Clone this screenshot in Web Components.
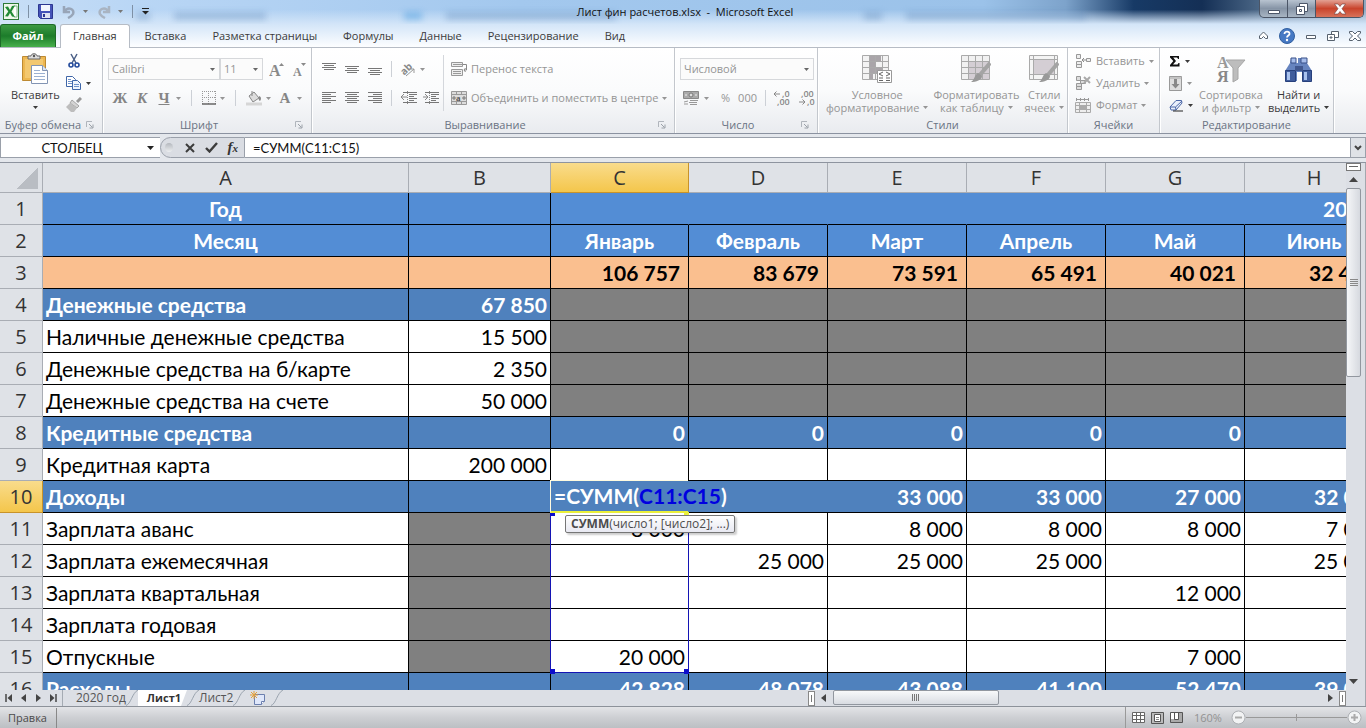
<!DOCTYPE html>
<html lang="ru">
<head>
<meta charset="utf-8">
<title>Лист фин расчетов.xlsx - Microsoft Excel</title>
<style>
  html, body { margin: 0; height: 100%; overflow: hidden; }
  body { font: 11px/14px "Open Sans", "Noto Sans", sans-serif; color: #3b3b3b; background: #dfe2e7; }
  excel-app { height: 100%; }
</style>
</head>
<body>
<excel-app></excel-app>

<script>
// Icons: [width, height, markup]
const lines = (rows) => rows.map(([x, y, w]) => `<path d="M${x} ${y}.5h${w}" stroke="#777"/>`).join('');
const ICONS = {
  excel: [16, 17, '<rect x=".5" y=".5" width="15" height="16" fill="#eef7ea" stroke="#2c7a37"/><path d="M11 3h3v11h-3" fill="#fff" stroke="#7fb88a"/><path d="M2 4l3-.5L7 7l2-4 3-.5-3.500 6L12 14l-3-.4L7 10l-2 3.500-3-.3 3.300-4.700z" fill="#218a35"/>'],
  save: [15, 15, '<path d="M.5.5h14v14h-12l-2-2z" fill="#4553b8" stroke="#2c3790"/><path d="M3 1h9v6H3z" fill="#f3f6fd"/><path d="M4 9h8v5H4z" fill="#dfe3f2"/><path d="M5 10h2v3H5z" fill="#2c3790"/>'],
  undo: [14, 14, '<path d="M2 1v6h6M2.500 6.500C6 1 13 4 11 9c-1 2-3 3-5 4" fill="none" stroke="#98a5b8" stroke-width="2.500"/>'],
  redo: [14, 14, '<path d="M12 1v6H6M11.500 6.500C8 1 1 4 3 9c1 2 3 3 5 4" fill="none" stroke="#a9b4c2" stroke-width="2.500"/>'],
  arrow: [5, 3, '<path d="M0 0h5L2.500 3z" fill="currentColor"/>'],
  qat: [7, 7, '<path d="M0 .5h7" stroke="#222"/><path d="M0 3h7L3.500 6.500z" fill="#222"/>'],
  namearrow: [7, 4, '<path d="M0 0h7L3.500 4z" fill="#222"/>'],
  paste: [28, 32, '<path d="M1.500 3.500h23v24h-23z" fill="#edb751" stroke="#bd8a33"/><path d="M4 6h18v19H4z" fill="#f3c870"/><path d="M7 6V3h3c0-3 6-3 6 0h3v3z" fill="#ddd" stroke="#666"/><circle cx="13" cy="3" r="1.200" fill="#555"/><path d="M10.500 12.500h11l5 5v13h-16z" fill="#fff" stroke="#8294b3"/><path d="M21.500 12.500v5h5" fill="#dbe4f2" stroke="#8294b3"/><path d="M13 17.500h6M13 20.500h11M13 23.500h11M13 26.500h11" stroke="#9cb1d1"/>'],
  cut: [16, 16, '<path d="M5 1l5 9M11 1L6 10" stroke="#4a5f86" stroke-width="1.500"/><circle cx="5" cy="12" r="2" fill="none" stroke="#244b9c" stroke-width="1.600"/><circle cx="11" cy="12" r="2" fill="none" stroke="#244b9c" stroke-width="1.600"/>'],
  copy: [16, 16, '<path d="M.5 1.500h6l3 3v7h-9z" fill="#fff" stroke="#3f66a8"/><path d="M2 4.500h3M2 6.500h5M2 8.500h5" stroke="#6f93cb"/><path d="M6.500 5.500h5l3 3v6h-8z" fill="#eef4fd" stroke="#3f66a8"/><path d="M8 9.500h5M8 11.500h5" stroke="#6f93cb"/>'],
  brush: [16, 16, '<path d="M15 1l-4 4" stroke="#999" stroke-width="3"/><path d="M6 3l7 6-2 2-7-5z" fill="#d4d4d4" stroke="#a5a5a5"/><path d="M4 6l7 5-3 4H5l-5-5z" fill="#bdbdbd"/>'],
  launcher: [8, 8, '<path d="M.5 6V.5H6" fill="none" stroke="#b0b5bc"/><path d="M3 3l3.500 3.500M7 3.500V7H3.500" fill="none" stroke="#9aa0a8"/>'],
  grow: [15, 15, '<text x="0" y="14" font-family="Liberation Serif" font-size="16" font-weight="700" fill="#8a8a8a">A</text><path d="M10 4l2.500-3L15 4z" fill="#8a8a8a"/>'],
  shrink: [15, 15, '<text x="2" y="14" font-family="Liberation Serif" font-size="12" font-weight="700" fill="#8a8a8a">A</text><path d="M10 1h5l-2.500 3z" fill="#8a8a8a"/>'],
  borders: [14, 14, '<path d="M.5 0v13M6.500 0v13M13.500 0v13M0 .5h14M0 6.500h14" stroke="#999" stroke-dasharray="1 1"/><path d="M0 13h14" stroke="#666" stroke-width="1.500"/>'],
  fill: [16, 16, '<path d="M3 6l5-4 5 6-6 4z" fill="#ddd" stroke="#888"/><path d="M6 1v5" stroke="#888"/><path d="M13 6c3 1 2 4 1 5-2-1-1-3-1-5z" fill="#888"/><path d="M0 14h16" stroke="#d6d6d6" stroke-width="3"/>'],
  top: [14, 14, lines([[0, 1, 14], [2, 3, 10], [0, 5, 14], [2, 7, 10]])],
  middle: [14, 14, lines([[0, 4, 14], [2, 6, 10], [0, 8, 14], [2, 10, 10]])],
  bottom: [14, 14, lines([[0, 6, 14], [2, 8, 10], [0, 10, 14], [2, 12, 10]])],
  left: [14, 14, lines([[0, 1, 14], [0, 3, 9], [0, 5, 14], [0, 7, 9], [0, 9, 14], [0, 11, 9]])],
  center: [14, 14, lines([[0, 1, 14], [2, 3, 10], [0, 5, 14], [2, 7, 10], [0, 9, 14], [2, 11, 10]])],
  right: [14, 14, lines([[0, 1, 14], [5, 3, 9], [0, 5, 14], [5, 7, 9], [0, 9, 14], [5, 11, 9]])],
  orient: [15, 15, '<text x="0" y="10" transform="rotate(-45 6 8)" font-size="10" font-family="Open Sans" font-weight="700" fill="#888">ab</text><path d="M5 14l8-7M9 7h4v4" fill="none" stroke="#999"/>'],
  outdent: [16, 14, lines([[2, 1, 14], [8, 3, 8], [8, 5, 5], [8, 7, 8], [8, 9, 5], [2, 11, 14]]) + '<path d="M0 6h6M3 3L0 6l3 3" fill="none" stroke="#888"/><path d="M6.500 0v14" stroke="#888" stroke-dasharray="1 1"/>'],
  indent: [16, 14, lines([[2, 1, 14], [8, 3, 8], [8, 5, 5], [8, 7, 8], [8, 9, 5], [2, 11, 14]]) + '<path d="M0 6h5M2 3l3 3-3 3" fill="none" stroke="#888"/><path d="M6.500 0v14" stroke="#888" stroke-dasharray="1 1"/>'],
  wrap: [16, 16, '<path d="M.5 1.500h11v4H.5zM.5 8.500h11v6H.5z" fill="#eee" stroke="#999"/><path d="M2 3.500h12M2 10.500h8M2 12.500h8" stroke="#999"/><path d="M12 3.500h3.500V9H13M14.500 7L13 9l1.500 2" fill="none" stroke="#888"/>'],
  merge: [16, 16, '<path d="M.5 1.500h15v13H.5zM.5 4.500h15M.5 11.500h15M5.500 1v3M10.500 1v3M5.500 12v3M10.500 12v3" fill="#ddd" stroke="#999"/><path d="M1 8h4M11 8h4M3 6v4M13 6v4" stroke="#777"/><text x="5" y="11" font-size="9" font-weight="700" font-family="Liberation Serif" fill="#555">a</text>'],
  money: [17, 16, '<path d="M.5 1.500h15v7H.5z" fill="#aaa" stroke="#888"/><circle cx="8" cy="5" r="2" fill="#ddd" stroke="#777"/><path d="M2 5h2M12 5h2" stroke="#eee"/><path d="M7 10.500h8M6 12.500h8M7 14.500h7M1 12l4-1M1 14h4" stroke="#999"/>'],
  inc: [17, 16, '<path d="M0 4h6M2.500 1.500L0 4l2.500 2.500" fill="none" stroke="#888"/><text x="8" y="7" font-size="9" font-weight="600" fill="#888">,0</text><text x="3" y="15" font-size="9" font-weight="600" fill="#888">,00</text>'],
  dec: [17, 16, '<path d="M0 12h6M3.500 9.500L6 12l-2.500 2.500" fill="none" stroke="#888"/><text x="2" y="7" font-size="9" font-weight="600" fill="#888">,00</text><text x="8" y="15" font-size="9" font-weight="600" fill="#888">,0</text>'],
  cond: [30, 30, '<path d="M.5.500h26v24H.5z" fill="#f3f3f3" stroke="#aaa"/><path d="M7 1h12v6h-5v6h6v6h-9v5H7z" fill="#a9a5a9"/><path d="M.5 6.500h26M.5 12.500h26M.5 18.500h26M7.500 0v25M13.500 0v25M20.500 0v25" fill="none" stroke="#aaa"/><path d="M15.500 15.500h14v12h-14z" fill="#fff" stroke="#999"/><path d="M21 17l-4 2 4 2M17 23h4M24 17l4 2-4 2M24 23h4M17 25.500h4M24 25.500h4" fill="none" stroke="#666"/>'],
  table: [30, 30, '<path d="M.5.500h28v24H.5z" fill="#f1f1f1" stroke="#aaa"/><path d="M7 7h21v17H7z" fill="#d4ced4"/><path d="M.5 6.500h28M.5 12.500h28M.5 18.500h28M7.500 0v25M14.500 0v25M21.500 0v25" stroke="#aaa"/><path d="M29 8L18 21" stroke="#a4a4a4" stroke-width="4"/><path d="M17 18l4 3c0 4-6 6-11 6 4-2 3-7 7-9z" fill="#999"/>'],
  styles: [30, 30, '<path d="M.5.500h28v24H.5z" fill="#f4f4f4" stroke="#aaa"/><path d="M5 5h20v14H5z" fill="#d4ced4"/><path d="M.5 4.500h28M.5 19.500h28M4.500 0v25M25.500 0v25" stroke="#aaa"/><path d="M29 8L18 21" stroke="#a4a4a4" stroke-width="4"/><path d="M17 18l4 3c0 4-6 6-11 6 4-2 3-7 7-9z" fill="#999"/>'],
  insert: [17, 15, '<path d="M1.500.5h4v4h-4zM1.500 7.500h5v3h-5zM1.500 10.500h5v3h-5zM11.500 4.500h4v3h-4z" fill="#eee" stroke="#999"/><path d="M7 6h4M9 4L7 6l2 2" fill="none" stroke="#888"/>'],
  remove: [17, 15, '<path d="M1.500.5h4v4h-4zM1.500 7.500h5v3h-5zM1.500 10.500h5v3h-5zM5.500 4.500h5v3h-5z" fill="#ddd" stroke="#999"/><path d="M9 1l6 6M15 1L9 7" stroke="#aaa" stroke-width="2"/>'],
  format: [17, 16, '<path d="M1 2.500h13M1.500 1v3M5.500 1v3M9.500 1v3M13.500 1v3" stroke="#999"/><path d="M.5 5.500h15v10H.5zM.5 8.500h15M.5 12.500h15M4.500 5v10M11.500 5v10" fill="#eee" stroke="#aaa"/><path d="M5 8h6v5H5z" fill="#aaa"/>'],
  sum: [12, 12, '<path d="M1 1h9v3H9.200L8 2.500H4.200L7 6 4 9.500h4.500L9.500 8h1v3.500H1V10l3.300-4L1 2.500z" fill="#111"/>'],
  down: [14, 15, '<path d="M.5.500h12v14H.5z" fill="#ddd" stroke="#999"/><path d="M5 3h3v5h2.500l-4 4.500-4-4.500H5z" fill="#888"/><path d="M0 2h13" stroke="#aaa"/>'],
  eraser: [15, 13, '<path d="M1 8l6-6.500h5.500L13 4l-6 7H2z" fill="#e9effb" stroke="#4a66a6"/><path d="M1 8h5.500l6.500-6M6.500 8L7 11" fill="none" stroke="#4a66a6"/><path d="M4 12h10" stroke="#222"/>'],
  sort: [30, 30, '<text x="1" y="13" font-family="Liberation Serif" font-size="16" font-weight="700" fill="#999">А</text><text x="1" y="27" font-family="Liberation Serif" font-size="16" font-weight="700" fill="#888">Я</text><path d="M10 5h19l-7 8v11l-5 3V13z" fill="#bdbdbd" stroke="#a6a6a6"/>'],
  find: [30, 30, '<path d="M7 3h5v5h2V3h9v5l5 8v10h-9v-9h-6v9H1V16l5-8z" fill="#6684bf"/><path d="M7 3h5v5H7zM17 3h6v5h-6z" fill="#a5bcea" stroke="#385189"/><path d="M1.500 15.500h10v11h-10zM18.500 15.500h9v11h-9z" fill="#3f5c9c" stroke="#27407c"/><path d="M3 17h3v8H3zM20 17h3v8h-3z" fill="#a9c2ee"/><path d="M11 11h8v5h-8z" fill="#41588f"/>'],
  up: [11, 9, '<path d="M1.500 5l4-4 4 4v2.500h-2L5.500 5.500l-2 2h-2z" fill="#fff" stroke="#56616e"/>'],
  help: [16, 16, '<circle cx="8" cy="8" r="7.500" fill="#4679c4" stroke="#315f9f"/><path d="M5.500 6c0-3.500 5.500-3 5 0-.3 1.500-2.500 1.500-2.500 3.500" fill="none" stroke="#fff" stroke-width="1.800"/><circle cx="8" cy="12" r="1.200" fill="#fff"/>'],
  min: [12, 12, '<path d="M1.500 5.500h9v3h-9z" fill="#fff" stroke="#56616e"/>'],
  restore: [12, 12, '<path d="M4.500 1.500h7v6h-7z" fill="#fff" stroke="#56616e"/><path d="M.5 4.500h7v6h-7zM3 7h2v1H3z" fill="#fff" stroke="#56616e"/>'],
  close: [12, 12, '<path d="M.5 1.500h3L6 4l2.500-2.500h3V3L8.500 6l3 3v1.500h-3L6 8l-2.500 2.500h-3V9l3-3-3-3z" fill="#fff" stroke="#56616e"/>'],
  wmin: [12, 12, '<path d="M.5 7.500h11v3H.5z" fill="#fff" stroke="#4c5668"/>'],
  wrestore: [12, 12, '<path d="M3.500.5h8v8h-8z" fill="#fff" stroke="#4c5668"/><path d="M.5 3.500h8v8h-8zM3.500 6.500h2v2h-2z" fill="#fff" stroke="#4c5668"/>'],
  wclose: [12, 12, '<path d="M.5 1h3.500l2 2.500L8 1h3.500L8 5.700l4 5.300H8L6 8.500 4 11H0l4-5.300z" fill="#fff" stroke="#6b3a3a" stroke-width=".6"/>'],
  cancel: [10, 10, '<path d="M1 1l8 8M9 1L4 6 1 9" stroke="#3c3c3c" stroke-width="2"/>'],
  ok: [13, 11, '<path d="M1 6l3.500 3.500L12 1" fill="none" stroke="#3c3c3c" stroke-width="2.400"/>'],
  chevron: [8, 6, '<path d="M1 1l3 3 3-3" fill="none" stroke="#444" stroke-width="2"/>'],
  first: [8, 8, '<path d="M1 0v8" stroke="#444" stroke-width="1.500"/><path d="M7 0v8L2.500 4z" fill="#444"/>'],
  prev: [6, 8, '<path d="M5 0v8L0 4z" fill="#444"/>'],
  next: [6, 8, '<path d="M1 0v8l5-4z" fill="#444"/>'],
  last: [8, 8, '<path d="M7 0v8" stroke="#444" stroke-width="1.500"/><path d="M1 0v8l4.500-4z" fill="#444"/>'],
  slash: [12, 16, '<path d="M0 15.500C5 14 6 3 12 0" fill="none" stroke="#9aa3ae"/>'],
  newsheet: [16, 14, '<path d="M4.500 3.500h10v7l-3 3h-7z" fill="#dfe7fa" stroke="#6b7fae"/><path d="M11.500 13.500v-3h3" fill="#fff" stroke="#6b7fae"/><path d="M4 0v8M0 4h8M1 1l6 6M7 1L1 7" stroke="#e4a03a"/>'],
  normal: [13, 11, '<path d="M.5.500h12v10H.5zM.5 3.500h12M.5 7.500h12M4.500 0v11M8.500 0v11" fill="#fff" stroke="#666"/>'],
  layout: [13, 12, '<path d="M.5.500h12v11H.5z" fill="#bbb" stroke="#555"/><path d="M3.500 2.500h6v7h-6z" fill="#fff" stroke="#555"/><path d="M5 5.500h3M5 7.500h3" stroke="#888"/>'],
  pages: [13, 11, '<path d="M.5.500h12v10H.5z" fill="#aaa" stroke="#555"/><path d="M1 1h3v6H1zM5 1h3v6H5z" fill="#fff"/><path d="M4.500 0v7.500H8.500V0" fill="none" stroke="#555"/>'],
  minus: [15, 15, '<circle cx="7.500" cy="7.500" r="6.500" fill="#f2f3f4" stroke="#aeb1b5"/><path d="M4 7.500h7" stroke="#aaa" stroke-width="2"/>'],
  plus: [15, 15, '<circle cx="7.500" cy="7.500" r="6.500" fill="#f2f3f4" stroke="#aeb1b5"/><path d="M4 7.500h7M7.500 4v7" stroke="#aaa" stroke-width="2"/>'],
};

function icon(name) {
  const [w, h, body] = ICONS[name];
  return `<svg width="${w}" height="${h}" viewBox="0 0 ${w} ${h}" fill="none" aria-hidden="true">${body}</svg>`;
}

const RESET = `
  :host, *, *::before { box-sizing: border-box; }
  button, select, input { font: inherit; color: inherit; margin: 0; padding: 0; border: 0; background: none; }
  a { color: inherit; text-decoration: none; }
  svg { display: block; flex: none; }
`;

function define(name, render) {
  customElements.define(name, class extends HTMLElement {
    constructor() {
      super();
      this.attachShadow({ mode: 'open' });
    }
    connectedCallback() {
      this.shadowRoot.innerHTML = render(this);
    }
  });
}

// Button of the ribbon: icon, optional text, optional drop-down arrow
define('tool-button', (el) => {
  const name = el.getAttribute('icon');
  const off = el.hasAttribute('off');
  const text = el.textContent.trim();
  const arrow = el.hasAttribute('arrow') ? icon('arrow') : '';
  let body;
  if (el.hasAttribute('big')) {
    body = `<slot></slot><span class="last"><slot name="line"></slot>${arrow}</span>`;
  } else if (text) {
    body = `<span class="${el.hasAttribute('letter') ? 'letter' : ''}"><slot></slot></span>${arrow}`;
  } else {
    body = arrow;
  }
  return `
  <style>${RESET}
    :host { display: block; flex: none; color: ${off ? '#959595' : '#3b3b3b'}; }
    button { display: flex; align-items: center; gap: 4px; height: 22px; white-space: nowrap; }
    :host([big]) button { flex-direction: column; justify-content: flex-start; gap: 3px; height: auto; line-height: 13px; }
    .last { display: flex; align-items: center; justify-content: center; gap: 4px; margin-top: -3px; min-height: 13px; }
    .letter { width: 16px; font: bold 15px/16px "Liberation Serif", serif; color: #858585; text-align: center; }
  </style>
  <button type="button" aria-label="${text || name}">${name ? icon(name) : ''}${body}</button>`;
});

define('combo-box', (el) => `
  <style>${RESET}
    :host { display: block; position: relative; color: #959595; }
    select { appearance: none; width: 100%; height: 22px; padding: 0 3px; border: 1px solid #d6d8db; background: #fbfbfb; }
    svg { position: absolute; right: 5px; top: 10px; color: #666; pointer-events: none; }
  </style>
  <select aria-label="${el.getAttribute('label')}"><option>${el.getAttribute('value')}</option></select>${icon('arrow')}`);

define('ribbon-group', (el) => `
  <style>${RESET}
    :host { display: flex; flex-direction: column; border-right: 1px solid #c3c7cd; box-shadow: 1px 0 #fff; }
    .body { flex: 1; min-height: 0; display: flex; padding: 2px 0 0; }
    footer { flex: none; display: flex; align-items: center; height: 16px; color: #6a7383; text-align: center; }
    footer span { flex: 1; white-space: nowrap; }
    footer button { width: 16px; }
  </style>
  <div class="body"><slot></slot></div>
  <footer><span>${el.getAttribute('label')}</span>${el.hasAttribute('launcher') ? `<button type="button" aria-label="Параметры">${icon('launcher')}</button>` : ''}</footer>`);

define('title-bar', () => `
  <style>${RESET}
    :host { display: flex; align-items: flex-start; height: 24px; position: relative; overflow: hidden; color: #111;
      background: linear-gradient(180deg, transparent 40%, #d3e5f8 100%), linear-gradient(90deg, #c8def6 0, #b9d6f5 10%, #a3c8ee 38%, #9bc2e9 72%, #7da3cb 78%, #173a66 83%, #142f55 88%, #55718f 93%, #91a8c0 100%); }
    .blur { position: absolute; inset: 8px 0 0; display: flex; align-items: center; gap: 24px; padding-left: 136px; filter: blur(3px); }
    .blur i { height: 8px; background: #5c86b8; opacity: .35; }
    .quick { flex: 1 1 0; display: flex; align-items: center; gap: 9px; padding: 0 3px; height: 23px; position: relative; }
    .quick button { display: flex; align-items: center; gap: 7px; color: #777; }
    .quick hr { width: 1px; height: 13px; margin: 0; border: 0; background: #7e90a5; }
    h1 { margin: 0; padding-top: 5px; font: inherit; white-space: pre; position: relative; }
    .right { flex: 1 1 0; display: flex; justify-content: flex-end; padding-right: 2px; position: relative; }
    .win { display: flex; height: 18px; border: 1px solid #4b5566; border-top: 0; border-radius: 0 0 5px 5px; overflow: hidden; background: linear-gradient(#b8c3d0, #8694a6 50%, #a8b5c3); }
    .win button { width: 28px; display: flex; justify-content: center; align-items: center; border-right: 1px solid #4b5566; }
    .win .x { width: 47px; border: 0; background: linear-gradient(#e3a193, #c9442c 50%, #d8725a); }
  </style>
  <div class="blur"><i style="width:14px"></i><i style="width:92px"></i><i style="width:90px;opacity:0"></i><i style="width:18px;background:#1c86d8"></i><i style="width:170px"></i><i style="width:200px;opacity:0"></i><i style="width:18px"></i><i style="width:180px"></i></div>
  <div class="quick">
    <button type="button" aria-label="Excel">${icon('excel')}</button><hr>
    <button type="button" aria-label="Сохранить">${icon('save')}</button>
    <button type="button" aria-label="Отменить">${icon('undo')}${icon('arrow')}</button>
    <button type="button" aria-label="Вернуть">${icon('redo')}${icon('arrow')}</button><hr>
    <button type="button" aria-label="Настройка панели">${icon('qat')}</button>
  </div>
  <h1>Лист фин расчетов.xlsx  -  Microsoft Excel</h1>
  <div class="right"><div class="win">
    <button type="button" aria-label="Свернуть">${icon('wmin')}</button>
    <button type="button" aria-label="Восстановить">${icon('wrestore')}</button>
    <button type="button" class="x" aria-label="Закрыть">${icon('wclose')}</button>
  </div></div>`);

define('ribbon-tabs', () => `
  <style>${RESET}
    :host { display: flex; align-items: stretch; height: 24px; border-bottom: 1px solid #b6bcc5; background: linear-gradient(#d3e5f8, #fdfeff); }
    nav { flex: 1; display: flex; align-items: stretch; }
    a { padding: 5px 13px 0; white-space: nowrap; }
    .file { margin-right: 4px; width: 56px; padding: 4px 0 0; text-align: center; font-weight: 700; color: #fff; border: 1px solid #1d6b27; border-bottom: 0; border-radius: 3px 3px 0 0; background: linear-gradient(#3d9a43, #1c7c2a 50%, #48b04c); }
    .on { margin: 0 2px -1px 0; padding: 4px 12px 0; border: 1px solid #b6bcc5; border-bottom: 0; border-radius: 3px 3px 0 0; background: #fff; }
    .tools { display: flex; align-items: center; gap: 10px; padding-right: 5px; }
  </style>
  <nav>
    <a href="#" class="file">Файл</a><a href="#" class="on">Главная</a><a href="#">Вставка</a><a href="#">Разметка страницы</a><a href="#">Формулы</a><a href="#">Данные</a><a href="#">Рецензирование</a><a href="#">Вид</a>
  </nav>
  <div class="tools">${['up', 'help', 'min', 'restore', 'close'].map((n) => `<button type="button" aria-label="${n}">${icon(n)}</button>`).join('')}</div>`);

define('ribbon-panel', () => `
  <style>${RESET}
    :host { display: flex; height: 86px; border-bottom: 1px solid #8b92a0; background: linear-gradient(#fff, #fafbfc 50%, #e9ebef); }
    ribbon-group { flex: none; }
    .clip { width: 103px; } .font { width: 209px; } .align { width: 363px; } .num { width: 143px; }
    .style { width: 250px; } .cells { width: 92px; } .edit { width: 174px; }
    .col { display: flex; flex-direction: column; }
    .rows { display: flex; flex-direction: column; gap: 7px; padding-top: 8px; }
    .row { display: flex; align-items: center; height: 22px; }
    .sep { flex: none; width: 1px; height: 16px; background: #ccd0d6; margin: 0 4px; }
    .tall { flex: none; width: 1px; height: 56px; margin: 5px 7px 0; background: #d4d7dc; }
    .big { display: flex; padding-top: 5px; }
  </style>
  <ribbon-group class="clip" label="Буфер обмена" launcher>
    <div class="big" style="padding:3px 6px 0 11px"><tool-button big icon="paste" arrow>Вставить</tool-button></div>
    <div class="col">
      <tool-button icon="cut"></tool-button><tool-button icon="copy" arrow></tool-button><tool-button icon="brush"></tool-button>
    </div>
  </ribbon-group>
  <ribbon-group class="font" label="Шрифт" launcher>
    <div class="rows" style="padding-left:5px">
      <div class="row"><combo-box label="Шрифт" value="Calibri" style="width:112px"></combo-box><combo-box label="Размер шрифта" value="11" style="width:43px"></combo-box>
        <div class="row" style="gap:7px;padding-left:6px"><tool-button icon="grow"></tool-button><tool-button icon="shrink"></tool-button></div></div>
      <div class="row" style="gap:6px;padding-left:4px">
        <tool-button letter off>Ж</tool-button><tool-button letter off><i>К</i></tool-button><tool-button letter off arrow><u>Ч</u></tool-button><span class="sep"></span>
        <tool-button icon="borders" off arrow></tool-button><span class="sep"></span><tool-button icon="fill" off arrow></tool-button><tool-button letter off arrow>A</tool-button>
      </div>
    </div>
  </ribbon-group>
  <ribbon-group class="align" label="Выравнивание" launcher>
    <div class="rows" style="padding-left:10px;width:124px">
      <div class="row" style="gap:9px"><tool-button icon="top"></tool-button><tool-button icon="middle"></tool-button><tool-button icon="bottom"></tool-button><span class="sep" style="margin:0"></span><tool-button icon="orient" arrow off></tool-button></div>
      <div class="row" style="gap:9px"><tool-button icon="left"></tool-button><tool-button icon="center"></tool-button><tool-button icon="right"></tool-button><span class="sep" style="margin:0"></span><div class="row" style="gap:6px"><tool-button icon="outdent"></tool-button><tool-button icon="indent"></tool-button></div></div>
    </div>
    <span class="tall"></span>
    <div class="rows">
      <tool-button icon="wrap" off>Перенос текста</tool-button>
      <tool-button icon="merge" off arrow>Объединить и поместить в центре</tool-button>
    </div>
  </ribbon-group>
  <ribbon-group class="num" label="Число" launcher>
    <div class="rows" style="padding-left:5px">
      <combo-box label="Числовой формат" value="Числовой" style="width:134px"></combo-box>
      <div class="row" style="gap:8px;padding-left:3px"><tool-button icon="money" off arrow></tool-button><tool-button off style="padding-left:4px">%</tool-button><tool-button off>000</tool-button><span class="sep" style="margin:0"></span><tool-button icon="inc"></tool-button><tool-button icon="dec"></tool-button></div>
    </div>
  </ribbon-group>
  <ribbon-group class="style" label="Стили">
    <div class="big" style="gap:5px;padding-left:8px">
      <tool-button big off arrow icon="cond">Условное<span slot="line">форматирование</span></tool-button>
      <tool-button big off arrow icon="table">Форматировать<span slot="line">как таблицу</span></tool-button>
      <tool-button big off arrow icon="styles">Стили<span slot="line">ячеек</span></tool-button>
    </div>
  </ribbon-group>
  <ribbon-group class="cells" label="Ячейки">
    <div class="col" style="padding-left:7px">
      <tool-button off arrow icon="insert">Вставить</tool-button><tool-button off arrow icon="remove">Удалить</tool-button><tool-button off arrow icon="format">Формат</tool-button>
    </div>
  </ribbon-group>
  <ribbon-group class="edit" label="Редактирование">
    <div class="col" style="padding-left:9px;width:39px">
      <tool-button arrow icon="sum"></tool-button><tool-button off arrow icon="down"></tool-button><tool-button arrow icon="eraser"></tool-button>
    </div>
    <div class="big" style="gap:5px">
      <tool-button big off arrow icon="sort">Сортировка<span slot="line">и фильтр</span></tool-button>
      <tool-button big arrow icon="find">Найти и<span slot="line">выделить</span></tool-button>
    </div>
  </ribbon-group>`);

define('formula-bar', () => `
  <style>${RESET}
    :host { display: flex; height: 29px; padding: 3px 0 4px; border-bottom: 1px solid #8e949f; background: #e4e7ec; font: 13px/20px Lato, "Open Sans", sans-serif; color: #111; }
    .name { display: flex; align-items: center; width: 160px; padding-right: 6px; background: #fff; border: solid #9aa0aa; border-width: 1px 0 1px 1px; }
    .name input { flex: 1; min-width: 0; padding-right: 4px; text-align: center; }
    .tools { display: flex; align-items: center; gap: 10px; width: 85px; padding: 0 6px 0 4px; border: 1px solid #9aa0aa; border-radius: 11px 0 0 11px; background: #dadde3; }
    .knob { width: 9px; height: 9px; border-radius: 50%; background: linear-gradient(#b4b8be, #eceef0); margin-right: 2px; }
    .fx { font: italic bold 15px/16px "Liberation Serif", serif; color: #333; }
    .fx small { font-size: 11px; }
    .line { flex: 1; min-width: 0; padding: 0 8px; background: #fff; border: solid #9aa0aa; border-width: 1px 0; }
    .more { width: 16px; display: flex; align-items: center; justify-content: center; background: #dfe2e7; border: 1px solid #9aa0aa; }
  </style>
  <label class="name"><input aria-label="Имя" value="СТОЛБЕЦ">${icon('namearrow')}</label>
  <div class="tools"><span class="knob"></span><button type="button" aria-label="Отмена">${icon('cancel')}</button><button type="button" aria-label="Ввод">${icon('ok')}</button><button type="button" class="fx">f<small>x</small></button></div>
  <input class="line" aria-label="Строка формул" value="=СУММ(C11:C15)">
  <button type="button" class="more" aria-label="Развернуть">${icon('chevron')}</button>`);

// Sheet data: [row class, A, B, C ... H]
const ROWS = [
  ['head', 'Год', '', '', '', '', '', '', '20'],
  ['head', 'Месяц', '', 'Январь', 'Февраль', 'Март', 'Апрель', 'Май', 'Июнь'],
  ['peach', '', '', '106 757', '83 679', '73 591', '65 491', '40 021', '32 400'],
  ['sub grey', 'Денежные средства', '67 850', '', '', '', '', '', ''],
  ['grey', 'Наличные денежные средства', '15 500', '', '', '', '', '', ''],
  ['grey', 'Денежные средства на б/карте', '2 350', '', '', '', '', '', ''],
  ['grey', 'Денежные средства на счете', '50 000', '', '', '', '', '', ''],
  ['sub', 'Кредитные средства', '', '0', '0', '0', '0', '0', ''],
  ['', 'Кредитная карта', '200 000', '', '', '', '', '', ''],
  ['sub', 'Доходы', '', 'EDIT', '', '33 000', '33 000', '27 000', '32 000'],
  ['greyb', 'Зарплата аванс', '', '8 000', '', '8 000', '8 000', '8 000', '7 000'],
  ['greyb', 'Зарплата ежемесячная', '', '', '25 000', '25 000', '25 000', '', '25 000'],
  ['greyb', 'Зарплата квартальная', '', '', '', '', '', '12 000', ''],
  ['greyb', 'Зарплата годовая', '', '', '', '', '', '', ''],
  ['greyb', 'Отпускные', '', '20 000', '', '', '', '7 000', ''],
  ['sub', 'Расходы', '', '42 828', '48 078', '43 088', '41 100', '52 470', '39 000'],
];
const EDITOR = `
  <div class="range"><b></b><b></b><b></b><b></b></div>
  <div class="editor" contenteditable="true" spellcheck="false">=СУММ(<span>C11:C15</span>)</div>
  <div class="tip"><b>СУММ</b>(число1; [число2]; ...)</div>`;

define('sheet-grid', () => `
  <style>${RESET}
    :host { display: block; overflow: hidden; font: 21px/30px Lato, "Open Sans", sans-serif; color: #000; }
    table { table-layout: fixed; width: 1384px; border-collapse: separate; border-spacing: 0; }
    th { font: 20px/28px "Open Sans", sans-serif; color: #333; padding: 0; border: solid #a9adb4; border-width: 0 1px 1px 0; background: #dfe2e7; }
    thead th { height: 30px; }
    td { height: 32px; padding: 0 3px; border: solid #000; border-width: 0 1px 1px 0; background: #fff; text-align: right; white-space: nowrap; }
    td:nth-child(2) { text-align: left; }
    .corner { background: linear-gradient(135deg, transparent 50%, #b9bdc3 50%) 16px 5px / 22px 21px no-repeat, #dfe2e7; }
    .active { background: linear-gradient(#f9dc8c, #f4c64b); border-color: #c8932a; }
    .sub td { background: #4f81bd; color: #fff; font-weight: 700; }
    .head td { background: #538dd5; color: #fff; font-weight: 700; text-align: center; }
    .head:first-child td:nth-child(n+4):not(:last-child) { border-right-color: #538dd5; }
    .head:first-child td:last-child { text-align: left; padding-left: 78px; }
    .peach td { background: #fabf8f; font-weight: 700; padding-right: 8px; }
    tr.grey td:nth-child(n+4) { background: #808080; }
    .greyb td:nth-child(3) { background: #808080; }
    .cell { position: relative; }
    .editor { position: absolute; left: 0; top: 0; z-index: 2; width: 277px; height: 31px; padding: 0 3px; color: #fff; background: #4f81bd; text-align: left; }
    .editor span { color: #0000e0; }
    .cell::before { content: ""; position: absolute; inset: -1px 0 -1px -1px; z-index: 3; border: 1px solid #fffbe0; border-right: 0; border-bottom: 2px solid #eaf03a; pointer-events: none; }
    .range { position: absolute; left: -1px; top: 32px; z-index: 1; width: 139px; height: 160px; border: 1px solid #1414b4; border-top: 0; }
    .range b { position: absolute; width: 5px; height: 5px; background: #0d0dcc; }
    .range b:nth-child(1) { left: -1px; top: -2px; }
    .range b:nth-child(2) { right: -1px; top: -2px; background: #eaf03a; }
    .range b:nth-child(3) { left: -1px; bottom: -2px; }
    .range b:nth-child(4) { right: -1px; bottom: -2px; }
    .tip { position: absolute; left: 14px; top: 34px; z-index: 4; padding: 0 5px; border: 1px solid #767676; border-radius: 2px; background: linear-gradient(#fff, #e8e9f2); box-shadow: 2px 2px 2px #0003; font: 12px/16px "Open Sans", sans-serif; color: #4c4c4c; }
  </style>
  <table>
    <colgroup><col style="width:43px"><col style="width:366px"><col style="width:142px"><col style="width:138px">${'<col style="width:139px">'.repeat(5)}</colgroup>
    <thead><tr><th class="corner"></th>${[...'ABCDEFGH'].map((c) => `<th${c === 'C' ? ' class="active"' : ''}>${c}</th>`).join('')}</tr></thead>
    <tbody>${ROWS.map(([cls, ...cells], i) => `<tr class="${cls}"><th${i === 9 ? ' class="active"' : ''}>${i + 1}</th>${cells.map((c) => c === 'EDIT' ? `<td class="cell">${EDITOR}</td>` : `<td>${c}</td>`).join('')}</tr>`).join('')}</tbody>
  </table>`);

define('v-scroll', () => `
  <style>${RESET}
    :host { display: flex; flex-direction: column; align-items: center; width: 20px; padding-right: 4px; background: #dcdfe5; border-right: 1px solid #a3a7ae; }
    .split { width: 15px; height: 8px; border: 1px solid #777; background: #fff; padding: 2px; }
    .split::before { content: ""; display: block; height: 1px; background: #666; }
    button { display: flex; align-items: center; justify-content: center; height: 17px; }
    .track { flex: 1; align-self: stretch; }
    .thumb { height: 39%; display: flex; align-items: center; justify-content: center; border: 1px solid #92979f; border-radius: 2px; background: linear-gradient(90deg, #f5f6f8, #d6d9df); }
    .grip { width: 8px; height: 8px; background: repeating-linear-gradient(#888 0 1px, transparent 1px 2px); }
  </style>
  <div class="split"></div>
  <button type="button" aria-label="Вверх"><svg width="9" height="5"><path d="M0 5h9L4.500 0z" fill="#444"/></svg></button>
  <div class="track"><div class="thumb"><i class="grip"></i></div></div>
  <button type="button" aria-label="Вниз"><svg width="9" height="5"><path d="M0 0h9L4.500 5z" fill="#444"/></svg></button>`);

define('sheet-tabs', () => `
  <style>${RESET}
    :host { display: flex; height: 17px; border-bottom: 1px solid #8d929a; background: #dcdfe5; line-height: 16px; }
    nav { flex: 1; display: flex; align-items: flex-start; }
    .go { display: flex; gap: 8px; align-items: center; height: 16px; width: 63px; padding-left: 5px; border-right: 1px solid #a5abb3; }
    a { height: 16px; white-space: nowrap; font-size: 12px; color: #555; }
    .first { padding: 0 0 0 13px; }
    .on { padding: 0 6px 0 9px; background: #fff; font-weight: 700; font-size: 11px; color: #333; clip-path: polygon(0 0, 100% 0, calc(100% - 6px) 100%, 0 100%); }
    .new { padding: 1px 5px; }
    .bar { display: flex; align-items: center; width: 540px; padding-left: 2px; }
    .box { width: 7px; height: 15px; border: 1px solid #888; background: #fff; padding: 3px 2px; }
    .box::before { content: ""; display: block; width: 1px; height: 7px; background: #777; }
    .bar button { width: 18px; display: flex; justify-content: center; }
    .track { flex: 1; height: 16px; }
    .thumb { width: 34%; height: 15px; display: flex; align-items: center; justify-content: center; border: 1px solid #92979f; border-radius: 2px; background: linear-gradient(#f8f9fa, #d9dce2); }
    .grip { width: 8px; height: 7px; background: repeating-linear-gradient(90deg, #777 0 1px, transparent 1px 2px); }
    .end { width: 20px; border-right: 1px solid #a3a7ae; }
  </style>
  <nav>
    <div class="go">${['first', 'prev', 'next', 'last'].map((n) => `<button type="button" aria-label="${n}">${icon(n)}</button>`).join('')}</div>
    <a href="#" class="first">2020 год</a>${icon('slash')}<a href="#" class="on">Лист1</a>${icon('slash')}<a href="#">Лист2</a>${icon('slash')}
    <button type="button" aria-label="Вставить лист" class="new">${icon('newsheet')}</button>${icon('slash')}
  </nav>
  <div class="bar"><i class="box"></i><button type="button" aria-label="Влево">${icon('prev')}</button><div class="track"><div class="thumb"><i class="grip"></i></div></div><button type="button" aria-label="Вправо">${icon('next')}</button><i class="box"></i></div>
  <span class="end"></span>`);

define('status-bar', () => `
  <style>${RESET}
    :host { display: flex; align-items: center; height: 21px; background: linear-gradient(#e3e4e7, #cdcfd3 50%, #bcbfc3); color: #4a4a4a; }
    .mode { width: 57px; padding-left: 8px; border-right: 1px solid #888; line-height: 20px; }
    .views { margin-left: auto; display: flex; align-items: center; gap: 6px; height: 21px; padding-left: 6px; border-left: 1px solid #999; }
    .zoom { display: flex; align-items: center; padding: 0 4px 0 11px; color: #929292; }
    .zoom span { width: 37px; }
    input { appearance: none; width: 101px; height: 15px; background: linear-gradient(#999, #999) 50% 50% / 1px 7px no-repeat, linear-gradient(#999, #999) 0 50% / 100% 1px no-repeat; }
    input::-webkit-slider-thumb { appearance: none; width: 1px; height: 1px; }
  </style>
  <span class="mode">Правка</span>
  <div class="views">${['normal', 'layout', 'pages'].map((n) => `<button type="button" aria-label="${n}">${icon(n)}</button>`).join('')}</div>
  <div class="zoom"><span>160%</span><button type="button" aria-label="Уменьшить">${icon('minus')}</button><input type="range" aria-label="Масштаб"><button type="button" aria-label="Увеличить">${icon('plus')}</button></div>`);

define('excel-app', () => `
  <style>
    :host { display: flex; flex-direction: column; }
    title-bar, ribbon-tabs, ribbon-panel, formula-bar, sheet-tabs, status-bar { flex: none; }
    main { flex: 1; min-height: 0; display: flex; }
    sheet-grid { flex: 1; min-width: 0; }
    v-scroll { flex: none; }
  </style>
  <title-bar></title-bar>
  <ribbon-tabs></ribbon-tabs>
  <ribbon-panel></ribbon-panel>
  <formula-bar></formula-bar>
  <main><sheet-grid></sheet-grid><v-scroll></v-scroll></main>
  <sheet-tabs></sheet-tabs>
  <status-bar></status-bar>`);
</script>
</body>
</html>
